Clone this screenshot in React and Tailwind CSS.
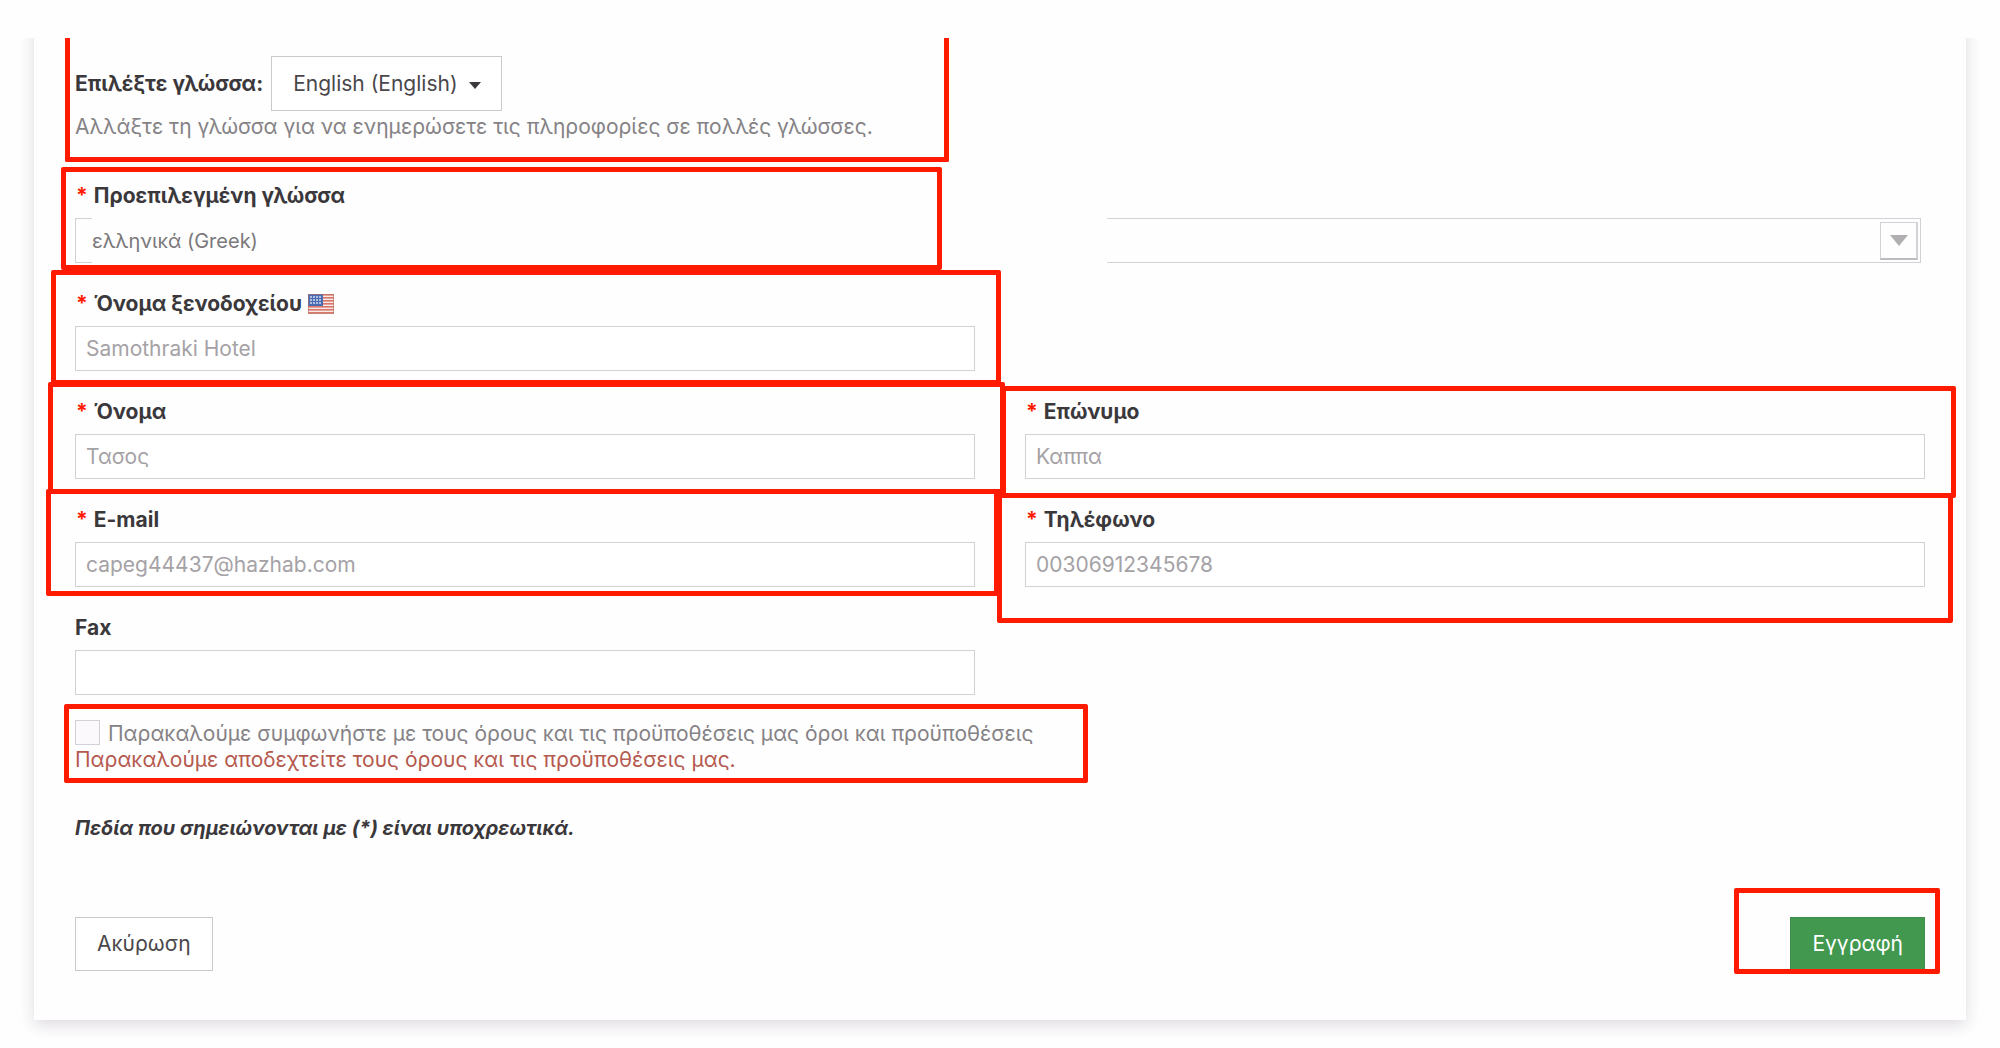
import { useState } from 'react';
import clsx from 'clsx';

const FONT = "font-['Inter','Noto_Sans',sans-serif]";

// Red frame drawn over the part of the form that needs attention
function Mark({ className }) {
  return (
    <span
      aria-hidden="true"
      className={clsx('pointer-events-none absolute rounded-[2px] border-5 border-[#ff1a00]', className)}
    />
  );
}

function Required() {
  return <span className="mr-[6px] ml-px font-bold text-[#ff1a00]">*</span>;
}

function UsFlag() {
  return (
    <svg viewBox="0 0 26 20" className="ml-[6px] h-5 w-[26px]" role="img" aria-label="English">
      <rect width="26" height="20" fill="#f6e9e6" />
      {[0, 3, 6, 9, 12, 15, 18].map(y => (
        <rect key={y} y={y} width="26" height="1.6" fill="#d9776a" />
      ))}
      <rect width="15" height="12" fill="#4a6cb3" />
      {[2, 5, 8].map(y =>
        [3, 6, 9, 12].map(x => <circle key={`${x}-${y}`} cx={x} cy={y + 1} r="0.9" fill="#dfe8f7" />)
      )}
      <rect x="0.5" y="0.5" width="25" height="19" fill="none" stroke="#b5705f" strokeOpacity="0.6" />
    </svg>
  );
}

function Field({ id, label, required, flag, mark, ...props }) {
  return (
    <div className="relative">
      <label htmlFor={id} className="flex h-7 items-center font-bold text-[#3b383c]">
        {required && <Required />}
        {label}
        {flag && <UsFlag />}
      </label>
      <input
        id={id}
        className="mt-2 block h-[45px] w-full border border-[#d3d1d5] bg-white px-[10px] text-[#a5a2a6] focus:outline-none"
        {...props}
      />
      {mark && <Mark className={mark} />}
    </div>
  );
}

export default function App() {
  const [language, setLanguage] = useState('en');
  const [accepted, setAccepted] = useState(false);

  return (
    <div className={clsx('bg-[#fefefe] pt-[38px] text-[21px] leading-7 text-[#858286]', FONT)}>
      <div className="overflow-hidden px-[34px] pb-[29px]">
        <form
          onSubmit={e => e.preventDefault()}
          className="-mt-10 bg-[#fefefe] px-[41px] pt-[58px] pb-[49px] shadow-[0_5px_14px_rgba(60,40,70,0.16)]"
        >
          {/* Language switch */}
          <div className="relative">
            <div className="flex items-center">
              <label htmlFor="language" className="mr-2 font-bold text-[#3b383c]">
                Επιλέξτε γλώσσα:
              </label>
              <div className="relative">
                <select
                  id="language"
                  value={language}
                  onChange={e => setLanguage(e.target.value)}
                  className="h-[55px] appearance-none border border-[#cbc9cc] bg-white pr-[43px] pl-[21px] text-[#4a474b]"
                >
                  <option value="en">English (English)</option>
                </select>
                <svg viewBox="0 0 12 7" className="pointer-events-none absolute top-[26px] right-[21px] h-[7px] w-3">
                  <path d="M0 0h12L6 7z" fill="#3b383c" />
                </svg>
              </div>
            </div>
            <p className="mt-[2px]">Αλλάξτε τη γλώσσα για να ενημερώσετε τις πληροφορίες σε πολλές γλώσσες.</p>
            <Mark className="-top-[18px] -bottom-[21px] -left-[10px] w-[884px] rounded-t-none border-t-0" />
          </div>

          {/* Default language */}
          <div className="relative mt-[41px]">
            <label htmlFor="default-language" className="flex h-7 items-center font-bold text-[#3b383c]">
              <Required />
              Προεπιλεγμένη γλώσσα
            </label>
            <div className="relative mt-2 mr-1 flex h-[45px]">
              <span className="w-[17px] border-y border-l border-[#d3d1d5]" />
              <span className="w-[55%]" />
              <span className="flex flex-1 items-center justify-end border-y border-r border-[#d3d1d5] pr-[2px]">
                <span className="flex h-[38px] w-[38px] items-center justify-center border border-r-2 border-b-2 border-[#d3d1d5] border-b-[#bdbbbe]">
                  <svg viewBox="0 0 18 11" className="h-[11px] w-[18px]">
                    <path d="M0 0h18L9 11z" fill="#b1afb2" />
                  </svg>
                </span>
              </span>
              <select
                id="default-language"
                className="absolute inset-0 w-full appearance-none bg-transparent pl-[17px] text-[20px] text-[#7b787c]"
              >
                <option>ελληνικά (Greek)</option>
              </select>
            </div>
            <Mark className="-top-[15px] -bottom-[7px] -left-[14px] w-[881px]" />
          </div>

          {/* Contact details */}
          <div className="mt-[27px] grid grid-cols-2 gap-x-[50px] gap-y-[27px]">
            <Field
              id="hotel"
              label="Όνομα ξενοδοχείου"
              defaultValue="Samothraki Hotel"
              mark="-top-[20px] -bottom-[14px] -left-6 -right-[26px]"
              required
              flag
            />
            <div />
            <Field
              id="first-name"
              label="Όνομα"
              defaultValue="Τασος"
              mark="-top-[16px] -bottom-[15px] -left-[27px] -right-[30px]"
              required
            />
            <Field
              id="last-name"
              label="Επώνυμο"
              defaultValue="Καππα"
              mark="-top-[12px] -bottom-[19px] -left-6 -right-[31px]"
              required
            />
            <Field
              id="email"
              type="email"
              label="E-mail"
              defaultValue="capeg44437@hazhab.com"
              mark="-top-[17px] -bottom-[9px] -left-[29px] -right-6"
              required
            />
            <Field
              id="phone"
              type="tel"
              label="Τηλέφωνο"
              defaultValue="00306912345678"
              mark="-top-[13px] -bottom-9 -left-7 -right-7"
              required
            />
            <Field id="fax" label="Fax" />
          </div>

          {/* Terms */}
          <div className="relative mt-[25px]">
            <div className="flex items-start gap-2">
              <input
                id="terms"
                type="checkbox"
                checked={accepted}
                onChange={e => setAccepted(e.target.checked)}
                className="h-[25px] w-[25px] appearance-none border border-[#d3d1d5] bg-[#fbf9fc] checked:bg-[#43984f]"
              />
              <label htmlFor="terms">
                Παρακαλούμε συμφωνήστε με τους όρους και τις προϋποθέσεις μας όροι και προϋποθέσεις
              </label>
            </div>
            {!accepted && (
              <p className="leading-6 text-[#b5594e]">Παρακαλούμε αποδεχτείτε τους όρους και τις προϋποθέσεις μας.</p>
            )}
            <Mark className="-top-4 -bottom-[11px] -left-[11px] w-[1024px]" />
          </div>

          <p className="mt-[42px] text-[20px] font-bold text-[#3b383c] italic">
            Πεδία που σημειώνονται με (*) είναι υποχρεωτικά.
          </p>

          <div className="mt-[75px] flex items-center justify-between">
            <button type="button" className="h-[54px] border border-[#cbc9cc] bg-white px-[21px] text-[#4a474b]">
              Ακύρωση
            </button>
            <div className="relative">
              <button type="submit" className="h-[54px] border border-[#3d8f4a] bg-[#43984f] px-[21px] text-white">
                Εγγραφή
              </button>
              <Mark className="-top-[29px] -right-[15px] -bottom-[3px] -left-[56px]" />
            </div>
          </div>
        </form>
      </div>
    </div>
  );
}
